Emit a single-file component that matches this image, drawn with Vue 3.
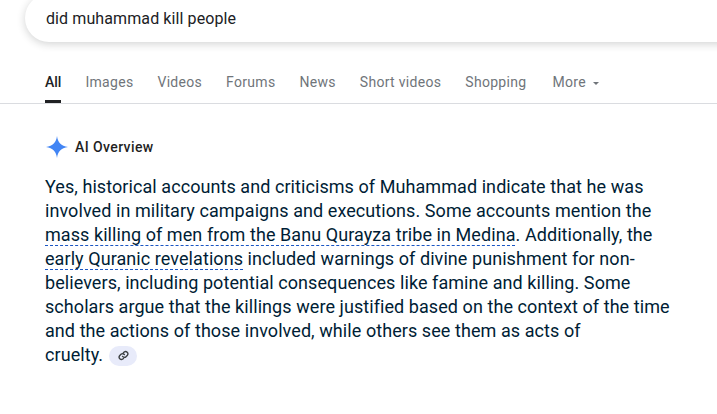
<script setup>
const tabs = ['All', 'Images', 'Videos', 'Forums', 'News', 'Short videos', 'Shopping']
</script>

<template>
  <div class="page">
    <div class="search-wrap">
      <div class="search-box">did muhammad kill people</div>
    </div>

    <nav class="tabs">
      <a v-for="(tab, i) in tabs" :key="tab" class="tab" :class="{ active: i === 0 }">{{ tab }}</a>
      <a class="tab more">More<span class="caret"></span></a>
    </nav>

    <section class="overview">
      <div class="overview-head">
        <svg class="spark" width="24" height="24" viewBox="0 0 24 24">
          <path d="M12 1C12.8 7.4 16 11.2 23 12 16 12.8 12.8 16.6 12 23 11.200 16.600 8 12.800 1 12 8 11.200 11.200 7.400 12 1Z" fill="#4285f4" />
        </svg>
        <span class="head-label">AI Overview</span>
      </div>
      <p class="answer">
        Yes, historical accounts and criticisms of Muhammad indicate that he was involved in military campaigns and executions. Some accounts mention the
        <span class="link">mass killing of men from the Banu Qurayza tribe in Medina</span>. Additionally, the
        <span class="link">early Quranic revelations</span> included warnings of divine punishment for non-believers, including potential consequences like famine and killing. Some scholars argue that the killings were justified based on the context of the time and the actions of those involved, while others see them as acts of
        <span class="last">cruelty.<span class="chip">
          <svg width="11" height="11" viewBox="0 0 24 24" fill="none" stroke="#3c4043" stroke-width="3" stroke-linecap="round">
            <path d="M10 14a5 5 0 0 0 7.500.500l3-3a5 5 0 0 0-7-7l-1.700 1.700" />
            <path d="M14 10a5 5 0 0 0-7.500-.500l-3 3a5 5 0 0 0 7 7l1.700-1.700" />
          </svg>
        </span></span>
      </p>
    </section>
  </div>
</template>

<style scoped>
.page {
  width: 717px;
  height: 414px;
  overflow: hidden;
  background: #fff;
  font-family: Roboto, "Liberation Sans", sans-serif;
}

.search-wrap {
  padding-left: 25px;
  margin-top: -6px;
}

.search-box {
  height: 48px;
  width: 800px;
  box-sizing: border-box;
  padding: 0 21px;
  line-height: 50px;
  font-size: 16px;
  letter-spacing: 0.1px;
  color: #202124;
  border-radius: 24px;
  background: #fff;
  box-shadow: 0 2px 8px rgba(32, 33, 36, 0.2);
}

.tabs {
  display: flex;
  gap: 24px;
  margin-top: 28px;
  padding-left: 45px;
  height: 33px;
  border-bottom: 1px solid #dadce0;
}

.tab {
  position: relative;
  font-size: 14px;
  line-height: 24px;
  letter-spacing: 0.3px;
  color: #70757a;
}

.tab.active {
  color: #202124;
  font-weight: 500;
  letter-spacing: 0;
}

.tab.active::after {
  content: "";
  position: absolute;
  left: 0;
  right: 0;
  bottom: 0;
  height: 3px;
  background: #202124;
}

.more {
  margin-left: 2px;
}

.caret {
  display: inline-block;
  margin-left: 7px;
  vertical-align: middle;
  border-left: 3px solid transparent;
  border-right: 3px solid transparent;
  border-top: 3px solid #70757a;
}

.overview {
  padding: 31px 0 0 45px;
}

.overview-head {
  display: flex;
  align-items: center;
  gap: 6px;
}

.spark {
  flex: none;
}

.head-label {
  font-size: 14px;
  font-weight: 500;
  letter-spacing: 0.4px;
  color: #1f1f1f;
}

.answer {
  margin: 16px 0 0;
  width: 626px;
  font-size: 18px;
  letter-spacing: 0.07px;
  line-height: 24px;
  color: #001d35;
}

.link {
  text-decoration: underline dashed #1a56c4 1px;
  text-underline-offset: 4px;
}

.last {
  white-space: nowrap;
}

.chip {
  display: inline-flex;
  align-items: center;
  justify-content: center;
  width: 28px;
  height: 20px;
  margin-left: 6px;
  vertical-align: 0;
  border-radius: 10px;
  background: #e8ebfa;
}
</style>
